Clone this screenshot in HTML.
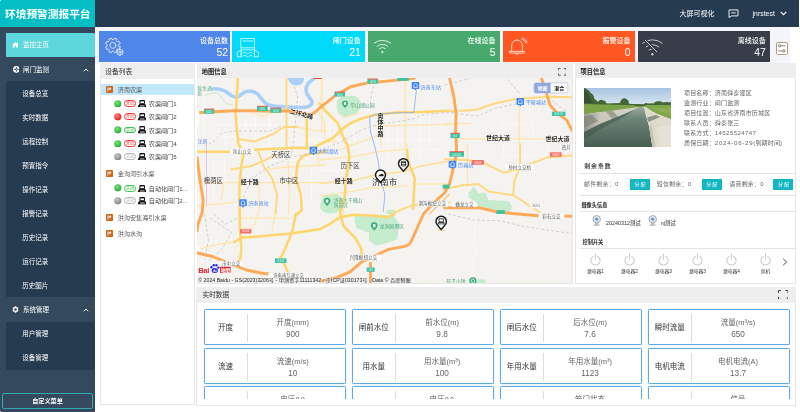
<!DOCTYPE html>
<html lang="zh"><head><meta charset="utf-8"><title>环境预警测报平台</title>
<style>
*{box-sizing:border-box;margin:0;padding:0}
html,body{width:800px;height:412px;overflow:hidden;background:#fff}
body{will-change:transform;font-family:"Liberation Sans","Noto Sans CJK SC",sans-serif;color:#333;position:relative}
.abs{position:absolute}
#hdr{left:0;top:0;width:799px;height:26.5px;background:#263a50}
#logo{left:0;top:0;width:94.5px;height:27px;background:#04bec4;color:#fff;font-weight:bold;font-size:10.7px;line-height:28.6px;padding-left:5px;overflow:hidden;white-space:nowrap;letter-spacing:0px}
#side{left:0;top:27px;width:95px;height:385px;background:#34495e}
.mi{position:absolute;left:6.3px;width:88.7px;height:24px;color:#fff;font-size:6.5px;line-height:24px;white-space:nowrap}
.mi span{position:absolute;left:16.7px}
.sub{position:absolute;left:6.3px;width:88.7px;background:#263a50}
.si{position:absolute;left:16px;color:#fff;font-size:6.5px;line-height:24px;height:24px;white-space:nowrap}
.card{position:absolute;top:31px;height:30.7px;color:#fff}
.card .t{position:absolute;right:4.8px;top:5px;font-size:7px;line-height:9px;white-space:nowrap;font-weight:500}
.card .n{position:absolute;right:4.8px;top:15.6px;font-size:10.4px;line-height:12px}
.panel{position:absolute;background:#fff;outline:1px solid #e6e6e6;outline-offset:-1px}
.ph{position:absolute;left:0;top:0;right:0;height:15px;background:#eeeeee}
.pt{position:absolute;font-size:6.25px;font-weight:bold;color:#222;line-height:8px;white-space:nowrap}
.tr{position:absolute;left:0;width:93px;height:11px;font-size:6.1px;line-height:11px;color:#444;white-space:nowrap}
.info{position:absolute;left:684px;font-size:6.05px;line-height:10px;color:#666;white-space:nowrap;letter-spacing:0.12px}
.btn{position:absolute;top:178.7px;width:19.8px;height:11px;background:#13b7c4;color:#fff;font-size:5px;line-height:11px;text-align:center;letter-spacing:1px;padding-left:1px}
.lb{position:absolute;font-size:5.9px;line-height:8px;color:#666;white-space:nowrap;letter-spacing:0.3px}
.hr{position:absolute;height:0.5px;background:#e4e4e4}
.dc{position:absolute;width:141.7px;height:35.6px;border:1px solid #5aabe3;border-radius:1.5px;background:#fff;box-shadow:0 0 1.2px rgba(78,163,222,.55)}
.dc .l{position:absolute;left:0;top:0;width:40.5px;height:34px;line-height:35px;text-align:center;font-size:7.5px;color:#333;white-space:nowrap}
.dc .d{position:absolute;left:41.8px;top:4px;width:0.6px;height:28px;background:#ddd}
.dc .v1{position:absolute;left:43px;right:5.4px;top:7.6px;text-align:center;font-size:7.5px;line-height:10px;color:#666;white-space:nowrap}
.dc .v2{position:absolute;left:43px;right:5.4px;top:20px;text-align:center;font-size:8.2px;line-height:10px;color:#666}
.c1 .v1,.c1 .v2{right:7.6px}
</style></head><body>
<div id="hdr" class="abs"></div>
<div id="logo" class="abs">环境预警测报平台</div>
<div class="abs" style="left:679.4px;top:8.5px;font-size:7px;line-height:10px;color:#fff;white-space:nowrap">大屏可视化</div>
<div class="abs" style="left:752.6px;top:8.5px;font-size:6.9px;line-height:10px;color:#fff;white-space:nowrap">jnrstest</div>
<svg class="abs" style="left:728px;top:9px" width="11" height="9" viewBox="0 0 11 9"><path d="M1 0.9h9v6h-6.5l-2.5 1.6z" fill="none" stroke="#fff" stroke-width="0.9"/><path d="M3.2 3.9h4.6" stroke="#fff" stroke-width="0.9"/></svg>
<svg class="abs" style="left:780px;top:11px" width="7" height="5" viewBox="0 0 7 5"><path d="M0.7 0.8L3.5 3.6L6.3 0.8" fill="none" stroke="#fff" stroke-width="1.1"/></svg>

<div id="side" class="abs">
 <div class="mi" style="top:6px;background:#5ed7dc"><span>监控主页</span></div>
 <div class="mi" style="top:30.5px"><span>闸门监测</span></div>
 <div class="sub" style="top:54px;height:216px">
  <div class="si" style="top:0.5px">设备总览</div>
  <div class="si" style="top:24.5px">实时数据</div>
  <div class="si" style="top:48.5px">远程控制</div>
  <div class="si" style="top:72.5px">预置指令</div>
  <div class="si" style="top:96.5px">操作记录</div>
  <div class="si" style="top:120.5px">报警记录</div>
  <div class="si" style="top:144.5px">历史记录</div>
  <div class="si" style="top:168.5px">运行记录</div>
  <div class="si" style="top:192.5px">历史图片</div>
 </div>
 <div class="mi" style="top:270.5px"><span>系统管理</span></div>
 <div class="sub" style="top:294.7px;height:48px">
  <div class="si" style="top:0px">用户管理</div>
  <div class="si" style="top:24px">设备管理</div>
 </div>
<svg class="abs" style="left:12.4px;top:15.4px" width="6.8" height="5.8" viewBox="0 0 6.8 5.8"><path d="M3.4,0.2 L6.7,3 L5.9,3 L5.9,5.6 L4.1,5.6 L4.1,3.8 L2.7,3.8 L2.7,5.6 L0.9,5.6 L0.9,3 L0.1,3z" fill="#fff"/><rect x="5" y="0.5" width="0.9" height="1.6" fill="#fff"/></svg><svg class="abs" style="left:12.5px;top:38.8px" width="6.8" height="6.8" viewBox="0 0 6.8 6.8"><circle cx="3.4" cy="3.4" r="3.3" fill="#fff"/><path d="M3.4,0.9V5.9M0.9,3.4H5.9" stroke="#34495e" stroke-width="0.8"/><circle cx="3.4" cy="3.4" r="1.1" fill="#34495e"/><circle cx="3.4" cy="3.4" r="0.5" fill="#fff"/></svg><svg class="abs" style="left:12.3px;top:279.3px" width="7" height="7" viewBox="0 0 7 7"><path d="M3.5,0.2 L4.2,0.3 L4.4,1.2 L5.1,1.6 L5.9,1.2 L6.5,2.2 L5.9,2.9 L5.9,4.1 L6.5,4.8 L5.9,5.8 L5.1,5.4 L4.4,5.8 L4.2,6.7 L2.8,6.7 L2.6,5.8 L1.9,5.4 L1.1,5.8 L0.5,4.8 L1.1,4.1 L1.1,2.9 L0.5,2.2 L1.1,1.2 L1.9,1.6 L2.6,1.2 L2.8,0.3z" fill="#fff"/><circle cx="3.5" cy="3.5" r="1.2" fill="#34495e"/></svg><svg class="abs" style="left:83px;top:40.6px" width="6" height="4" viewBox="0 0 6 4"><path d="M0.8,3.2 L3,1 L5.2,3.2" fill="none" stroke="#fff" stroke-width="1"/></svg><svg class="abs" style="left:83px;top:280.8px" width="6" height="4" viewBox="0 0 6 4"><path d="M0.8,3.2 L3,1 L5.2,3.2" fill="none" stroke="#fff" stroke-width="1"/></svg>

 <div class="abs" style="left:2px;top:366px;width:91px;height:15.8px;border:0.8px solid #36a9b5;border-radius:2px;color:#fff;font-size:6.1px;line-height:14.3px;text-align:center;font-weight:bold">自定义菜单</div>
</div>

<!-- stat row -->
<div class="abs" style="left:95px;top:26.5px;width:695.3px;height:37px;background:#f3f5fa"></div>
<div class="card" style="left:99px;width:131.3px;background:#4f86ea"><div class="t" style="right:2.3px">设备总数</div><div class="n" style="right:2.3px">52</div></div>
<div class="card" style="left:232.1px;width:133.4px;background:#00d9f9"><div class="t">闸门设备</div><div class="n">21</div></div>
<div class="card" style="left:367.5px;width:132.9px;background:#47a96e"><div class="t">在线设备</div><div class="n">5</div></div>
<div class="card" style="left:502.5px;width:132.9px;background:#ff5722"><div class="t">报警设备</div><div class="n">0</div></div>
<div class="card" style="left:637.6px;width:132.9px;background:#393d4a"><div class="t">离线设备</div><div class="n">47</div></div>
<div class="abs" style="left:775.7px;top:41.8px;width:12px;height:13px;border:0.7px solid #b59a7c;border-radius:1.8px;background:#fff"></div>

<svg class="abs" style="left:0;top:0;pointer-events:none" width="800" height="70" viewBox="0 0 800 70"><g fill="none" stroke="rgba(255,255,255,0.8)" stroke-width="0.9" stroke-linejoin="round" stroke-linecap="round"><path d="M120.22,47.04 L119.23,49.42 L117.67,48.87 L116.37,50.17 L116.92,51.73 L114.54,52.72 L113.82,51.23 L111.98,51.23 L111.26,52.72 L108.88,51.73 L109.43,50.17 L108.13,48.87 L106.57,49.42 L105.58,47.04 L107.07,46.32 L107.07,44.48 L105.58,43.76 L106.57,41.38 L108.13,41.93 L109.43,40.63 L108.88,39.07 L111.26,38.08 L111.98,39.57 L113.82,39.57 L114.54,38.08 L116.92,39.07 L116.37,40.63 L117.67,41.93 L119.23,41.38 L120.22,43.76 L118.73,44.48 L118.73,46.32z"/><circle cx="112.9" cy="45.4" r="3"/><path d="M123.15,51.73 L123.15,52.87 L122.14,52.84 L121.86,53.50 L122.60,54.20 L121.80,55.00 L121.10,54.26 L120.44,54.54 L120.47,55.55 L119.33,55.55 L119.36,54.54 L118.70,54.26 L118.00,55.00 L117.20,54.20 L117.94,53.50 L117.66,52.84 L116.65,52.87 L116.65,51.73 L117.66,51.76 L117.94,51.10 L117.20,50.40 L118.00,49.60 L118.70,50.34 L119.36,50.06 L119.33,49.05 L120.47,49.05 L120.44,50.06 L121.10,50.34 L121.80,49.60 L122.60,50.40 L121.86,51.10 L122.14,51.76z" fill="#4f86ea"/><circle cx="119.9" cy="52.3" r="0.9"/></g><g fill="none" stroke="rgba(255,255,255,0.8)" stroke-width="0.9" stroke-linejoin="round" stroke-linecap="round"><path d="M241.2,38.5H254.5V47.8H241.2z"/><path d="M243,41H252.8" stroke-dasharray="0.9 0.7"/><path d="M241.2,47.8V56.8M254.5,47.8V56.8M242,49.8H253.8"/><path d="M237.6,52 L241.2,49.8V56.8H237.6zM258,52 L254.5,49.8V56.8H258z"/><path d="M243.3,53 c1,-1 2,-1 3,0 s2,1 3,0 s2,-1 3,0M243.3,56.2 c1,-1 2,-1 3,0 s2,1 3,0 s2,-1 3,0"/></g><g fill="none" stroke="rgba(255,255,255,0.8)" stroke-width="1" stroke-linejoin="round" stroke-linecap="round"><path d="M374.10,43.15 A13.50,13.50 0 0 1 390.70,43.15"/><path d="M377.00,46.15 A8.80,8.80 0 0 1 387.80,46.15"/><path d="M379.40,48.55 A4.80,4.80 0 0 1 385.40,48.55"/></g><circle cx="382.4" cy="52.099999999999994" r="1.1" fill="rgba(255,255,255,0.85)"/><g fill="none" stroke="rgba(255,255,255,0.8)" stroke-width="0.9" stroke-linejoin="round" stroke-linecap="round"><path d="M511.7,51.4 V45.8 C511.7,42.2 514,40.2 517,40.2 C520,40.2 522.3,42.2 522.3,45.8 V51.4"/><path d="M510,51.4 H524 C525,51.4 525,53 524,53 H510 C509,53 509,51.4 510,51.4z"/><path d="M515.6,53.2 L517,54.8 L518.4,53.2"/><path d="M517,40.2V39.4"/><path d="M521.8,39.3 C523.8,39.8 525.2,41.2 525.8,43.2M522.6,37.9 C524.8,38.6 526.4,40.2 527.1,42.4"/></g><g fill="none" stroke="rgba(255,255,255,0.7)" stroke-width="1" stroke-linejoin="round" stroke-linecap="round"><path d="M642.60,43.19 A15.50,15.50 0 0 1 662.20,43.19"/><path d="M646.10,46.78 A10.20,10.20 0 0 1 658.70,46.78"/><path d="M649.10,49.93 A5.40,5.40 0 0 1 655.70,49.93"/></g><path d="M644.3,39.3 L657.8,52.8" stroke="#393d4a" stroke-width="3.2"/><path d="M645.2,40.2 L656.9,51.9" stroke="rgba(255,255,255,0.72)" stroke-width="1" stroke-linecap="round"/><circle cx="652.4" cy="54.2" r="1.2" fill="rgba(255,255,255,0.75)"/><g fill="none" stroke="#555" stroke-width="0.7"><circle cx="779.6" cy="45.8" r="1.2"/><path d="M780.8,45.8H785.4"/><circle cx="783.9" cy="50.9" r="1.2"/><path d="M778.2,50.9H782.7"/></g></svg>
<!-- device list panel -->
<div class="panel" id="dev" style="left:100.3px;top:63.3px;width:94.4px;height:342px">
 <div class="ph" style="height:15.7px"></div>
 <div class="abs" style="left:5px;top:3.6px;font-size:6.75px;line-height:9px;color:#333;white-space:nowrap">设备列表</div>
<div class="abs" style="left:0.3px;top:20.5px;width:93.4px;height:11px;background:#c2e9fb"></div><svg class="abs" style="left:5.7px;top:22.5px" width="7" height="7" viewBox="0 0 7 7"><rect width="7" height="7" rx="0.6" fill="#d2691e"/><path d="M1.9 1.5v4.2" stroke="#fff" stroke-width="0.7"/><path d="M2.4 1.7h2.7v2.1h-2.7z" fill="#fbe3cf"/></svg><div class="tr" style="left:17.5px;top:20.5px;color:#555">济南农渠</div><svg class="abs" style="left:14px;top:36.5px" width="7.6" height="7.6" viewBox="0 0 7.6 7.6"><defs><radialGradient id="g403" cx="0.4" cy="0.35" r="0.7"><stop offset="0" stop-color="#7fe07f"/><stop offset="1" stop-color="#1fa82f"/></radialGradient></defs><circle cx="3.8" cy="3.8" r="3.6" fill="url(#g403)"/></svg><div class="abs" style="left:23.7px;top:36.9px;width:12px;height:6.7px;border:0.8px solid #f23030;border-radius:3.4px;color:#f23030;font-size:4.1px;line-height:5.3px;text-align:center;font-weight:normal;white-space:nowrap;overflow:hidden;letter-spacing:-0.1px">开启</div><svg class="abs" style="left:37.8px;top:36.6px" width="8.4" height="7.4" viewBox="0 0 8.4 7.4"><path d="M1.9 0.5h4.6v3.2h-4.6z" fill="none" stroke="#111" stroke-width="1"/><path d="M2 1.3h4.4" stroke="#111" stroke-width="0.5"/><path d="M1 4h6.4v1.3h-6.4z" fill="#111"/><path d="M0 7.3v-1.8l2-1.2v3zM8.4 7.3v-1.8l-2-1.2v3z" fill="#111"/><path d="M2 6h4.4M2 7h4.4" stroke="#111" stroke-width="0.75"/></svg><div class="tr" style="left:48.5px;top:34.8px;width:auto">农渠闸门1</div><svg class="abs" style="left:14px;top:49.8px" width="7.6" height="7.6" viewBox="0 0 7.6 7.6"><defs><radialGradient id="g536" cx="0.4" cy="0.35" r="0.7"><stop offset="0" stop-color="#ff8080"/><stop offset="1" stop-color="#e01818"/></radialGradient></defs><circle cx="3.8" cy="3.8" r="3.6" fill="url(#g536)"/></svg><div class="abs" style="left:23.7px;top:50.2px;width:12px;height:6.7px;border:0.8px solid #f23030;border-radius:3.4px;color:#f23030;font-size:4.1px;line-height:5.3px;text-align:center;font-weight:normal;white-space:nowrap;overflow:hidden;letter-spacing:-0.1px">开启</div><svg class="abs" style="left:37.8px;top:49.9px" width="8.4" height="7.4" viewBox="0 0 8.4 7.4"><path d="M1.9 0.5h4.6v3.2h-4.6z" fill="none" stroke="#111" stroke-width="1"/><path d="M2 1.3h4.4" stroke="#111" stroke-width="0.5"/><path d="M1 4h6.4v1.3h-6.4z" fill="#111"/><path d="M0 7.3v-1.8l2-1.2v3zM8.4 7.3v-1.8l-2-1.2v3z" fill="#111"/><path d="M2 6h4.4M2 7h4.4" stroke="#111" stroke-width="0.75"/></svg><div class="tr" style="left:48.5px;top:48.1px;width:auto">农渠闸门2</div><svg class="abs" style="left:14px;top:63.1px" width="7.6" height="7.6" viewBox="0 0 7.6 7.6"><defs><radialGradient id="g668" cx="0.4" cy="0.35" r="0.7"><stop offset="0" stop-color="#7fe07f"/><stop offset="1" stop-color="#1fa82f"/></radialGradient></defs><circle cx="3.8" cy="3.8" r="3.6" fill="url(#g668)"/></svg><div class="abs" style="left:23.7px;top:63.5px;width:12px;height:6.7px;border:0.8px solid #3fc24f;border-radius:3.4px;color:#3fc24f;font-size:4.1px;line-height:5.3px;text-align:center;font-weight:normal;white-space:nowrap;overflow:hidden;letter-spacing:-0.1px">关闭</div><svg class="abs" style="left:37.8px;top:63.2px" width="8.4" height="7.4" viewBox="0 0 8.4 7.4"><path d="M1.9 0.5h4.6v3.2h-4.6z" fill="none" stroke="#111" stroke-width="1"/><path d="M2 1.3h4.4" stroke="#111" stroke-width="0.5"/><path d="M1 4h6.4v1.3h-6.4z" fill="#111"/><path d="M0 7.3v-1.8l2-1.2v3zM8.4 7.3v-1.8l-2-1.2v3z" fill="#111"/><path d="M2 6h4.4M2 7h4.4" stroke="#111" stroke-width="0.75"/></svg><div class="tr" style="left:48.5px;top:61.4px;width:auto">农渠闸门3</div><svg class="abs" style="left:14px;top:76.3px" width="7.6" height="7.6" viewBox="0 0 7.6 7.6"><defs><radialGradient id="g801" cx="0.4" cy="0.35" r="0.7"><stop offset="0" stop-color="#7fe07f"/><stop offset="1" stop-color="#1fa82f"/></radialGradient></defs><circle cx="3.8" cy="3.8" r="3.6" fill="url(#g801)"/></svg><div class="abs" style="left:23.7px;top:76.7px;width:12px;height:6.7px;border:0.8px solid #f23030;border-radius:3.4px;color:#f23030;font-size:4.1px;line-height:5.3px;text-align:center;font-weight:normal;white-space:nowrap;overflow:hidden;letter-spacing:-0.1px">开启</div><svg class="abs" style="left:37.8px;top:76.4px" width="8.4" height="7.4" viewBox="0 0 8.4 7.4"><path d="M1.9 0.5h4.6v3.2h-4.6z" fill="none" stroke="#111" stroke-width="1"/><path d="M2 1.3h4.4" stroke="#111" stroke-width="0.5"/><path d="M1 4h6.4v1.3h-6.4z" fill="#111"/><path d="M0 7.3v-1.8l2-1.2v3zM8.4 7.3v-1.8l-2-1.2v3z" fill="#111"/><path d="M2 6h4.4M2 7h4.4" stroke="#111" stroke-width="0.75"/></svg><div class="tr" style="left:48.5px;top:74.6px;width:auto">农渠闸门4</div><svg class="abs" style="left:14px;top:89.6px" width="7.6" height="7.6" viewBox="0 0 7.6 7.6"><defs><radialGradient id="g933" cx="0.4" cy="0.35" r="0.7"><stop offset="0" stop-color="#c8c8c8"/><stop offset="1" stop-color="#7d7d7d"/></radialGradient></defs><circle cx="3.8" cy="3.8" r="3.6" fill="url(#g933)"/></svg><div class="abs" style="left:23.7px;top:90.0px;width:12px;height:6.7px;border:0.8px solid #b5b5b5;border-radius:3.4px;color:#b5b5b5;font-size:4.1px;line-height:5.3px;text-align:center;font-weight:normal;white-space:nowrap;overflow:hidden;letter-spacing:-0.1px">关闭</div><svg class="abs" style="left:37.8px;top:89.7px" width="8.4" height="7.4" viewBox="0 0 8.4 7.4"><path d="M1.9 0.5h4.6v3.2h-4.6z" fill="none" stroke="#111" stroke-width="1"/><path d="M2 1.3h4.4" stroke="#111" stroke-width="0.5"/><path d="M1 4h6.4v1.3h-6.4z" fill="#111"/><path d="M0 7.3v-1.8l2-1.2v3zM8.4 7.3v-1.8l-2-1.2v3z" fill="#111"/><path d="M2 6h4.4M2 7h4.4" stroke="#111" stroke-width="0.75"/></svg><div class="tr" style="left:48.5px;top:87.9px;width:auto">农渠闸门5</div><svg class="abs" style="left:5.7px;top:106.9px" width="7" height="7" viewBox="0 0 7 7"><rect width="7" height="7" rx="0.6" fill="#d2691e"/><path d="M1.9 1.5v4.2" stroke="#fff" stroke-width="0.7"/><path d="M2.4 1.7h2.7v2.1h-2.7z" fill="#fbe3cf"/></svg><div class="tr" style="left:17.5px;top:104.9px;color:#555">金沟河引水渠</div><svg class="abs" style="left:14px;top:121.2px" width="7.6" height="7.6" viewBox="0 0 7.6 7.6"><defs><radialGradient id="g1250" cx="0.4" cy="0.35" r="0.7"><stop offset="0" stop-color="#7fe07f"/><stop offset="1" stop-color="#1fa82f"/></radialGradient></defs><circle cx="3.8" cy="3.8" r="3.6" fill="url(#g1250)"/></svg><div class="abs" style="left:23.7px;top:121.6px;width:12px;height:6.7px;border:0.8px solid #3fc24f;border-radius:3.4px;color:#3fc24f;font-size:4.1px;line-height:5.3px;text-align:center;font-weight:normal;white-space:nowrap;overflow:hidden;letter-spacing:-0.1px">关闭</div><svg class="abs" style="left:37.8px;top:121.3px" width="8.4" height="7.4" viewBox="0 0 8.4 7.4"><path d="M1.9 0.5h4.6v3.2h-4.6z" fill="none" stroke="#111" stroke-width="1"/><path d="M2 1.3h4.4" stroke="#111" stroke-width="0.5"/><path d="M1 4h6.4v1.3h-6.4z" fill="#111"/><path d="M0 7.3v-1.8l2-1.2v3zM8.4 7.3v-1.8l-2-1.2v3z" fill="#111"/><path d="M2 6h4.4M2 7h4.4" stroke="#111" stroke-width="0.75"/></svg><div class="tr" style="left:48.5px;top:119.5px;width:auto">自动化闸门1...</div><svg class="abs" style="left:14px;top:133.8px" width="7.6" height="7.6" viewBox="0 0 7.6 7.6"><defs><radialGradient id="g1376" cx="0.4" cy="0.35" r="0.7"><stop offset="0" stop-color="#c8c8c8"/><stop offset="1" stop-color="#7d7d7d"/></radialGradient></defs><circle cx="3.8" cy="3.8" r="3.6" fill="url(#g1376)"/></svg><div class="abs" style="left:23.7px;top:134.2px;width:12px;height:6.7px;border:0.8px solid #b5b5b5;border-radius:3.4px;color:#b5b5b5;font-size:4.1px;line-height:5.3px;text-align:center;font-weight:normal;white-space:nowrap;overflow:hidden;letter-spacing:-0.1px">关闭</div><svg class="abs" style="left:37.8px;top:133.9px" width="8.4" height="7.4" viewBox="0 0 8.4 7.4"><path d="M1.9 0.5h4.6v3.2h-4.6z" fill="none" stroke="#111" stroke-width="1"/><path d="M2 1.3h4.4" stroke="#111" stroke-width="0.5"/><path d="M1 4h6.4v1.3h-6.4z" fill="#111"/><path d="M0 7.3v-1.8l2-1.2v3zM8.4 7.3v-1.8l-2-1.2v3z" fill="#111"/><path d="M2 6h4.4M2 7h4.4" stroke="#111" stroke-width="0.75"/></svg><div class="tr" style="left:48.5px;top:132.1px;width:auto">自动化闸门2...</div><svg class="abs" style="left:5.7px;top:151.2px" width="7" height="7" viewBox="0 0 7 7"><rect width="7" height="7" rx="0.6" fill="#d2691e"/><path d="M1.9 1.5v4.2" stroke="#fff" stroke-width="0.7"/><path d="M2.4 1.7h2.7v2.1h-2.7z" fill="#fbe3cf"/></svg><div class="tr" style="left:17.5px;top:149.2px;color:#555">洪沟安集海引水渠</div><svg class="abs" style="left:5.7px;top:167.1px" width="7" height="7" viewBox="0 0 7 7"><rect width="7" height="7" rx="0.6" fill="#d2691e"/><path d="M1.9 1.5v4.2" stroke="#fff" stroke-width="0.7"/><path d="M2.4 1.7h2.7v2.1h-2.7z" fill="#fbe3cf"/></svg><div class="tr" style="left:17.5px;top:165.1px;color:#555">洪沟水沟</div>
</div>

<!-- map panel -->
<div class="panel" id="mapp" style="left:196.7px;top:63.3px;width:376.2px;height:220.6px">
 <div class="ph"></div>
 <div class="pt" style="left:5.1px;top:4.5px">地图信息</div>
<svg class="abs" style="left:361.3px;top:4.9px" width="8.4" height="7.8" viewBox="0 0 8.4 7.8"><path d="M0.5,2.4V0.5H2.6M5.8,0.5H7.9V2.4M7.9,5.4V7.3H5.8M2.6,7.3H0.5V5.4" fill="none" stroke="#444" stroke-width="0.8"/></svg>
<!--MAP-->
<svg class="abs" style="left:0.8px;top:14.7px" width="375" height="205.5" viewBox="197.5 78 375 205.5" font-family="'Liberation Sans','Noto Sans CJK SC',sans-serif">
<rect x="197.5" y="78" width="375" height="205.5" fill="#f5f3f0"/>
<!-- parks -->
<g fill="#c6ecce">
<path d="M338,100 C340,96 348,95 354,96 C360,97 362,102 361,107 C359,113 352,117.5 345,117 C339,116 335.5,108 338,100z"/>
<path d="M355,216 L374,214.5 L394,215.5 L399.5,224 L398,239 L388,243 L376,245.5 L369.5,241 L369.5,233 L357,228 L355,221z"/>
<path d="M468.8,193 L474.5,186.5 L479,193 L486,192.5 L489,200 L509,201 L513,207 L509.5,212 L480.5,208 L475.5,202 L469,197z"/>
<path d="M322,199 C324,194.5 332,192.5 337,194 C342,195.5 344.5,200 343.5,205 C342.5,210 338,213 332,213.5 C326,214 321,211 320.5,206z"/>
<path d="M386.3,214 L388,210 L395,209.5 L396.5,214z"/>
<rect x="477" y="279.4" width="9" height="4.1"/>
</g>
<path d="M204.5,95.5 C210,94 216,91 219.5,94 C223,98 224,102 227,103.5 L233.4,105.2" fill="none" stroke="#bfe8cf" stroke-width="0.9"/>
<!-- water -->
<g fill="none" stroke="#a8d0fa" stroke-linecap="round" stroke-linejoin="round">
<path d="M213,88.7 C220,88.5 224,90 227,92 C231,95 234,98 237.5,97 C241,96 243,92.5 247,91.5 C251,90.5 255,91.5 258,94 C261,97 263,101 266.5,103.5 C270,106 276,106.5 281,106.6 L296,107.4 C302,107.6 306,107.5 308.5,106.6 C313,105 313.5,102 311,99 C308,95.5 306.5,93 306.5,90 C306.5,86 309,82 314,79" stroke-width="3.6"/>
<path d="M289,78 L304,78 L303,82 C299,86.5 293,85.5 290,81z" fill="#a8d0fa" stroke-width="1.2"/>
</g>
<!-- thin grey/white streets -->
<g fill="none" stroke="#fdfcfb" stroke-width="0.8" opacity="0.8">
<path d="M204.5,78V146M214,125H288M256,114V146M270,114V160M226,128V146M214,137H236M246,120V150M300,140H345M330,118V146M355,120V146M388,118V160M398,118V172M420,118V160M430,118V150M376,140H445M400,150H445M502.8,123.6H533.4V140H502.8zM504,144V156H548V144M475.6,214 C476,230 474,240 474.8,250 L476.5,252 L474,256 L472,278.6M258,160H300M214,160V200M225,156V182M300,186V214M320,170H345M312,168V200"/>
</g>
<!-- minor yellow roads -->
<g fill="none" stroke="#ffe6ad" stroke-width="1.3" stroke-linecap="round" stroke-linejoin="round">
<path d="M322.5,78V132"/><path d="M321.7,78V101"/>
<path d="M252,112.5 L264,116.8 L270.8,113.4"/>
<path d="M376,126 L450,124.4"/>
<path d="M405.8,78V146"/>
<path d="M381.2,116V146"/>
<path d="M519.8,104.9V144"/>
<path d="M445,123.6H470.5"/>
<path d="M458,138.9H572.5"/>
<path d="M197.5,182.7H326"/>
<path d="M259.7,183V214"/>
<path d="M224,184.8 L221.5,200"/>
<path d="M198.5,206 L238.5,201.8"/>
<path d="M288.6,161 L290,195 L289,214"/>
<path d="M267.4,169.5 C280,167 300,166 326,165"/>
<path d="M320,160 L354,156.7 L379.5,151.6 L407,149"/>
<path d="M415.2,184H450"/>
<path d="M320,195.8 C340,194 360,190 371,188.2 L407,186"/>
<path d="M468,144V184.8"/>
<path d="M241.9,218.2H291.2"/>
<path d="M258,214 L255.5,224.2 C253,228 248,229 244,228"/>
<path d="M275.9,214 L272.5,231"/>
<path d="M201,248.8 L221.5,243.7 L235,242"/>
<path d="M320,143 L337,140.6"/>
<path d="M343,118 L360,113"/>
<path d="M319.3,112.9 L325.1,123.1 L325.1,140.6"/>
<path d="M341,149.3 L380,134.7"/>
<path d="M317.8,153.7 L319.3,165.3"/>
<path d="M298,127 L315,130.4 L326,131.2"/>
<path d="M407.5,144V150"/>
<path d="M340,200 L345,214"/>
<path d="M320,183.4 L354,180.5 L374.4,175.4 L405,171.2 L422,166 L450,161" stroke-width="1.6" stroke="#ffdf99"/>
</g>
<!-- major yellow roads -->
<g fill="none" stroke="#ffd56e" stroke-width="2.6" stroke-linecap="round" stroke-linejoin="round">
<path d="M238.3,78 L236.5,110 L236,114 L237,124 L238.7,143.7 L244.3,152.2 L241.9,165.5 L240.2,183 L239.8,195 L240.2,214 L240.5,231 L241.9,248 L241,258.2 L238,264"/>
<path d="M307.3,116.8V146" />
<path d="M197.5,151.7H230M255,149.8 L297,147.8 L311,148.2"/>
<path d="M320,103.5 C322,105 323.5,107.5 325.1,110 L338.2,123.1 L342.6,134.7 L348.4,146.4 L349.9,158 L348,170 L346.3,180 L345.5,195 L340.4,214"/>
<path d="M311,148.6 L316.4,146.4 L323.7,142.8 L333.9,137.7 L341.1,130.4 L349.9,123.8 L361.5,118.7 L374.4,115 L396.5,112.5 L422,112 L450,110.8"/>
<path d="M298,214 L302.2,210 L301.4,195 L296.3,178 L298,164.4 C299,159 303,156 308,154.2 L326,151.6"/>
<path d="M296.3,214 L292.9,231 L286,248 L281,258.2 L286,266.7 L288.6,273.5"/>
<path d="M235,242 L241.9,237.8 L264,236 L291.2,233.5 L308.1,231 L320,229.3 L330,224.2 L340.4,217.4 L354,214.8 L376,215.7 L388,217.4 L394.8,214"/>
<path d="M341.2,214 L343.8,226 L355.7,237.8 L361.6,248 L362.5,258.2"/>
<path d="M407.5,150 L408.4,161 L415.2,178 L414.3,195 L413.5,208.6"/>
</g>
<g fill="none" stroke="#ffd980" stroke-width="2" stroke-linecap="round" stroke-linejoin="round">

<path d="M238.5,138.9 L255.5,141.4 L272.5,134.6 L284.4,127 L298,127"/>
<path d="M287,78V146"/>
<path d="M231.7,169.5 L252,166 L267.4,159.3 L275,155"/>
<path d="M258.9,151.6 L264,166 L272.5,178 L277.6,195 L275.9,214"/>
<path d="M391.4,214 L408.4,206.9 L422,203.5 L450,202.6"/>
<path d="M445,111.3H455M459.4,110.8 L475.6,110 L496,103.2 L516.4,99 L533.4,97.7 L550.4,96.7 L572.5,97.2"/>
<path d="M445,159.3 L467,160 L484,162.7 L504.5,172.9 L521.5,167.8 L547,157.6 L572.5,155.5"/>
<path d="M520.6,144V166 L514.7,181.4 L513.8,195"/>
<path d="M445,189 L462,185.6 L479,184 L489.2,191.6 L513,195 L521.5,200 L530,206 L540,212"/>
</g>
<!-- orange highways -->
<g fill="none" stroke="#fdaa58" stroke-width="2.9" stroke-linecap="round" stroke-linejoin="round">
<path d="M197.5,112.7 L213,111.7 L235,110.8 L257,110.8 L271,111.2 L288,110.8 L298,112.3 L309,114.6 C313,114.8 316,112 320,108.2 L337,94.7 L350.6,87 L367.6,82.8 L388,81.1 L408.4,79 L415,78"/>
<path d="M450,78 L454.3,96.4 L456.6,113.4 L456,132 L457,146 L456.9,154.2 L453.5,169.5 L450,184 L445,193 L439,198.4 L428.8,208.6 L424,214 L418.6,226 L411.8,241.2 C410,245 407,246 405,246.3 L388,249.7 L376,255.6 L362.5,261.6 L350.6,271.8 L337,277.7 L322,281"/>
<path d="M541.9,78 L547,93 L550.4,104.9 L557.1,112.5 L567.3,120.2 L572.5,130.4"/>
<path d="M445,207.7 L479,207.7 L496,211.5 L513,213.5 L538.5,215.7 L572.5,216.3"/>
<path d="M197.7,157.6 L200.2,178 L203.6,200 L202.8,212 L198.5,224.2 L197.5,231"/>
<path d="M197.7,253 L213,256.5 L230,263.3 L247,270 L264,273.5 L300,276"/>
<path d="M371,263.3V283.5"/>
<path d="M450,194.5 L442.5,201.5 L432.5,211.5 L430,214" stroke-width="1.1" stroke="#fcc184"/>
</g>
<!-- purple thin + metro blue -->
<path d="M207,144V206" fill="none" stroke="#d6b8ec" stroke-width="0.7"/>
<path d="M416.9,90.4 L414.3,112.5 L396,112.8 L376,114.2 L370,117.6 L371,132 L375.2,146 L378.6,161 L381.2,178 L385.4,195 L383.7,212" fill="none" stroke="#7fb0f3" stroke-width="0.8"/>
<!-- railways -->
<g fill="none" stroke="#c2c2c2" stroke-width="0.7" stroke-dasharray="3 2">
<path d="M294.5,86.2 L298,96.4 L296.3,118.5 L293.7,144 L291.2,157.6 L267.4,167.8 L253.8,178 L245.3,193.3 L243,204"/>
<path d="M204.5,146 L214,142 L222,133 L236,131 L270,131 L284,125"/>
<path d="M374.4,86.2 C372,92 371,100 371,106.6"/>
<path d="M294.6,156.6 L316.4,152.2 L344,140.6 L361.5,130.4 L380,123.8 L396.5,121.9 L415.2,118.5 L425.4,114.2 L450,112.5 L462,114.2 L479,116 L496,108.3 L516.4,104"/>
<path d="M445,85.3 L470.5,78.5"/>
<path d="M507.9,79.4 L519.8,93"/>
<path d="M448.4,214 L473.9,220 L501,220.8 L521.5,226 L547,230 L572.4,233.5"/>
<path d="M205,214 L209,240 L205,260M210,218 L232,232 L222,250 L208,262M214,214 L226,224 L238,218"/>
<path d="M552,100 L568,112"/>
</g>
<!-- shields -->
<g>
<g fill="#3ec3a0"><rect x="204.5" y="109.3" width="10.2" height="4.4"/><rect x="257.5" y="106.5" width="10.7" height="4.4"/><rect x="270.8" y="108.3" width="11" height="4.4"/><rect x="335" y="92.3" width="10.5" height="4.2"/><rect x="368" y="79.3" width="10.6" height="4.3"/><rect x="397.8" y="78" width="11.4" height="2.8"/><rect x="552.4" y="111.7" width="13.6" height="4.3"/><rect x="451" y="133.5" width="9.3" height="4.5"/><rect x="450" y="152" width="14.5" height="4.7"/><rect x="496.8" y="210.2" width="8.5" height="3.8"/><rect x="443.2" y="184.6" width="6.8" height="4"/><rect x="275.5" y="258.4" width="11.5" height="4.6"/><rect x="367.2" y="267.5" width="8" height="4.3"/></g>
<g fill="#e8453c"><rect x="204.5" y="108.6" width="10.2" height="0.9"/><rect x="257.5" y="105.8" width="10.7" height="0.9"/><rect x="270.8" y="107.6" width="11" height="0.9"/><rect x="335" y="91.6" width="10.5" height="0.9"/><rect x="368" y="78.6" width="10.6" height="0.9"/><rect x="451" y="132.8" width="9.3" height="0.9"/><rect x="450" y="151.3" width="14.5" height="0.9"/><rect x="314" y="78" width="8" height="1"/></g>
<g fill="#f0736b"><rect x="472.2" y="160" width="12.2" height="4.7" rx="0.5"/><rect x="550.4" y="152.2" width="11.8" height="4.5" rx="0.5"/><rect x="240.5" y="229" width="11.5" height="4.5" rx="0.5"/></g>
<g fill="#fff" font-size="3" text-anchor="middle" opacity="0.85"><text x="209.6" y="112.6">G20</text><text x="262.8" y="109.8">G20</text><text x="276.3" y="111.6">G20</text><text x="340.2" y="95.5">G20</text><text x="373.3" y="82.6">G20</text><text x="559.2" y="115">S0101</text><text x="455.6" y="137">G2</text><text x="457.2" y="155.5">G2001</text><text x="478.3" y="163.5">G309</text><text x="556.3" y="155.6">G309</text><text x="246.2" y="232.4">G104</text><text x="281.2" y="261.8">S103</text><text x="371.2" y="270.8">G2</text></g>
</g>
<!-- white label boxes -->
<g fill="#fff" stroke="#e4e4e4" stroke-width="0.3">
<rect x="230.8" y="148.2" width="23.8" height="5.7" rx="1"/><rect x="418.2" y="201" width="29.2" height="5.2" rx="1"/><rect x="505.3" y="164" width="29.7" height="5.5" rx="1"/><rect x="560.5" y="145" width="12" height="5.2" rx="1"/><rect x="452.6" y="201.8" width="24.7" height="5.1" rx="1"/><rect x="530.8" y="203.5" width="11.9" height="4.7" rx="1"/><rect x="220.6" y="260.7" width="22.1" height="5.1" rx="1"/><rect x="269" y="272.6" width="40" height="4.6" rx="1"/><rect x="345.8" y="254.8" width="36.2" height="5.4" rx="1"/><rect x="539.3" y="214" width="25.5" height="4.2" rx="1"/><rect x="445" y="201.8" width="3.5" height="5.1" rx="1"/>
</g>
<g fill="#555" font-size="4.6" text-anchor="middle">
<text x="242.7" y="152.7">匡山立交</text><text x="432.8" y="205.3">港沟枢纽立交</text><text x="520.2" y="168.5">孙村立交桥</text><text x="566.5" y="149.4">燕井</text><text x="465" y="206">蟠龙立交</text><text x="536.8" y="207.2" font-size="3.4">X051</text><text x="231.7" y="264.9">市中立交</text><text x="289" y="276.6" font-size="4.4">济南南互通立交</text><text x="363.9" y="259.2">兴隆枢纽立交</text><text x="552" y="217.8">彩石立交</text>
</g>
<!-- district / road labels -->
<g fill="#444" font-size="6.3" text-anchor="middle">
<text x="213.8" y="182.8">槐荫区</text><text x="289.4" y="182.6">市中区</text><text x="281.4" y="156.7">天桥区</text><text x="350.6" y="167.8">历下区</text>
</g>
<g fill="#222" font-size="6" font-weight="bold" text-anchor="middle" stroke="#fff" stroke-width="0.5" paint-order="stroke">
<text x="250.3" y="183.6">经十路</text><text x="344.2" y="183.4">经十路</text><text x="498.5" y="140.3">世纪大道</text><text x="558" y="140.5">世纪大道</text>
<text transform="translate(301.5,116.2) rotate(14)">二环北路</text>
<text x="381" y="118">奥</text><text x="381" y="124">体</text><text x="381" y="130">中</text><text x="381" y="136">路</text>
</g>
<text x="385" y="184.6" font-size="8.3" fill="#222" text-anchor="middle" stroke="#fff" stroke-width="0.5" paint-order="stroke">济南市</text>
<!-- green poi -->
<g fill="#3fae7c">
<path d="M345.5,100.5a3,3 0 0 1 3,3c0,2-3,4.5-3,4.5s-3-2.5-3-4.5a3,3 0 0 1 3-3z"/>
<path d="M327.6,197.8a3.3,3.3 0 0 1 3.3,3.3c0,2.2-3.3,5-3.3,5s-3.3-2.8-3.3-5a3.3,3.3 0 0 1 3.3-3.3z"/>
<path d="M374.7,222.3a3.3,3.3 0 0 1 3.3,3.3c0,2.2-3.3,5-3.3,5s-3.3-2.8-3.3-5a3.3,3.3 0 0 1 3.3-3.3z"/>
<circle cx="473.4" cy="280.8" r="3.6"/>
</g>
<g fill="#fff"><rect x="344.4" y="102.2" width="2.2" height="2.6"/><rect x="326.4" y="199.6" width="2.4" height="3"/><rect x="373.5" y="224.2" width="2.4" height="3"/><circle cx="473.4" cy="280.8" r="1.7" fill="none" stroke="#fff" stroke-width="0.7"/></g>
<g fill="#4aa57c" font-size="4.9">
<text x="350.6" y="106.8">华山湖公园</text><text x="334.4" y="201.8" font-size="4.7">济南大千佛山</text><text x="334.4" y="207.4" font-size="4.7">风景区</text><text x="380.3" y="228.2">龙洞风景区</text><text x="446.7" y="283.2">孩子小镇</text>
<text x="197.9" y="89.6" font-size="4.9">际生态</text><text x="197.9" y="95.2" font-size="4.9">区</text>
</g>
<text x="198" y="143" font-size="4.9" fill="#5b8ff0">注册</text>
<!-- stations -->
<g id="stn">
<g fill="#3f86f5">
<path d="M413,82h6a.8,.8 0 0 1 .8,.8v5.4a.8,.8 0 0 1-.8,.8h-1.8l-1.2,1.6-1.2-1.6H413a.8,.8 0 0 1-.8-.8v-5.4a.8,.8 0 0 1 .8-.8z"/>
<path d="M517.8,98h6a.8,.8 0 0 1 .8,.8v5.4a.8,.8 0 0 1-.8,.8h-1.8l-1.2,1.6-1.2-1.6h-1.8a.8,.8 0 0 1-.8-.8v-5.4a.8,.8 0 0 1 .8-.8z"/>
<path d="M240.5,199.3h6a.8,.8 0 0 1 .8,.8v5.4a.8,.8 0 0 1-.8,.8h-1.8l-1.2,1.6-1.2-1.6h-1.8a.8,.8 0 0 1-.8-.8v-5.4a.8,.8 0 0 1 .8-.8z"/>
<path d="M311,146.7h6a.8,.8 0 0 1 .8,.8v5.4a.8,.8 0 0 1-.8,.8h-1.8l-1.2,1.6-1.2-1.6H311a.8,.8 0 0 1-.8-.8v-5.4a.8,.8 0 0 1 .8-.8z"/>
<path d="M450,160.8h6a.8,.8 0 0 1 .8,.8v5.4a.8,.8 0 0 1-.8,.8h-1.8l-1.2,1.6-1.2-1.6H450a.8,.8 0 0 1-.8-.8v-5.4a.8,.8 0 0 1 .8-.8z"/>
</g>
<g fill="none" stroke="#fff" stroke-width="0.7">
<path d="M414.3,87.6v-3l1.7-1.2 1.7,1.2v3z"/><path d="M519.1,103.6v-3l1.7-1.2 1.7,1.2v3z"/><path d="M241.8,204.9v-3l1.7-1.2 1.7,1.2v3z"/><path d="M312.3,152.3v-3l1.7-1.2 1.7,1.2v3z"/><path d="M451.3,166.4v-3l1.7-1.2 1.7,1.2v3z"/>
</g>
<g fill="#4a8af4" font-size="5.1">
<text x="421" y="88.8">济南东站</text><text x="526.2" y="104.2">平陵城站</text><text x="248.7" y="205.4">济南南站</text><text x="318.2" y="152.6">大明湖站</text><text x="458.6" y="167.1">历城站</text>
</g>
</g>
<!-- markers -->
<g id="mk">
<path d="M381,182.5 L377.6,178.6 A5,5 0 1 1 384.4,178.6z" fill="#fff" stroke="#1c1c1c" stroke-width="1.5"/>
<path d="M378.3,176.3c1-.2 1.2-1.6 2.4-1.8s1.6-1.2 2.6-.6s1.2,1.8.4,2.4z" fill="#1c1c1c"/>
<path d="M404,171.2 L400.6,167.3 A5,5 0 1 1 407.4,167.3z" fill="#fff" stroke="#1c1c1c" stroke-width="1.5"/>
<path d="M402,161.3h4v4.6h-4zM401.3,162.5h5.4M401.3,164.3h5.4" fill="none" stroke="#1c1c1c" stroke-width="0.8"/>
<path d="M441.7,229.8 L438.3,225.4 A5.2,5.2 0 1 1 445.1,225.4z" fill="#fff" stroke="#1c1c1c" stroke-width="1.5"/>
<path d="M439.5,218.8h4.4v3h-4.4zM438.8,222.5h5.8v1.4h-5.8z" fill="none" stroke="#1c1c1c" stroke-width="0.8"/>
<path d="M438.5,230.3h6.5" stroke="#f4c978" stroke-width="0.8"/>
</g>
<!-- map type control -->
<g>
<rect x="534.7" y="82.9" width="33.6" height="10" rx="1.2" fill="#fff" stroke="#8fa8df" stroke-width="0.5"/>
<path d="M535.9,82.9h15.2v10h-15.2a1.2,1.2 0 0 1-1.2-1.2v-7.6a1.2,1.2 0 0 1 1.2-1.2z" fill="#8ea8e0"/>
<text x="543" y="89.8" font-size="5" fill="#fff" text-anchor="middle" font-weight="bold">地图</text>
<text x="559.7" y="89.8" font-size="5" fill="#111" text-anchor="middle" font-weight="bold">混合</text>
</g>
<!-- left zoom ctrl remnants -->
<rect x="197.5" y="110" width="2.3" height="15" rx="1" fill="#fff" opacity="0.9"/>
<rect x="197.5" y="246" width="2.6" height="4.5" fill="#fff"/>
<!-- baidu logo -->
<g>
<text x="198.7" y="272.6" font-size="7.6" font-weight="bold" fill="#e4232d" letter-spacing="-0.3">Bai</text>
<g fill="#2932e1"><ellipse cx="215.3" cy="270.6" rx="3.2" ry="2.5"/><circle cx="211.9" cy="267.3" r="1.2"/><circle cx="214.2" cy="265.2" r="1.2"/><circle cx="216.9" cy="265.3" r="1.2"/><circle cx="218.9" cy="267.6" r="1.2"/></g>
<text x="215.3" y="271.9" font-size="3" fill="#fff" text-anchor="middle" font-weight="bold">du</text>
<rect x="220.5" y="266.7" width="10.5" height="6.2" rx="0.6" fill="#e4232d"/>
<text x="225.8" y="271.7" font-size="4.6" fill="#fff" text-anchor="middle" font-weight="bold">地图</text>
</g>
<text x="198.8" y="281.5" font-size="4.85" fill="#222" stroke="#f5f3f0" stroke-width="0.6" paint-order="stroke" textLength="212.5" lengthAdjust="spacingAndGlyphs">© 2024 Baidu - GS(2023)3206号 - 甲测资字11111342 - 京ICP证030173号 - Data © 百度智图</text>
</svg>
<!--/MAP-->
</div>

<!-- project panel -->
<div class="panel" id="proj" style="left:575.4px;top:63.3px;width:220.6px;height:220.4px">
 <div class="ph"></div>
 <div class="pt" style="left:5.1px;top:4.3px">项目信息</div>
<svg class="abs" style="left:8.7px;top:24.8px" width="87.1" height="59.4" viewBox="0 0 87.1 59.4" preserveAspectRatio="none">
<defs><linearGradient id="sky" x1="0" y1="0" x2="0" y2="1"><stop offset="0" stop-color="#a6c4e2"/><stop offset="1" stop-color="#dde8f0"/></linearGradient>
<linearGradient id="wat" x1="0" y1="0" x2="0" y2="1"><stop offset="0" stop-color="#9aaea3"/><stop offset="0.3" stop-color="#6c8577"/><stop offset="1" stop-color="#465d51"/></linearGradient>
<linearGradient id="lb" x1="0" y1="0" x2="1" y2="0"><stop offset="0" stop-color="#93948a"/><stop offset="0.3" stop-color="#c9c6ba"/><stop offset="1" stop-color="#d6d3c8"/></linearGradient></defs>
<rect width="87.1" height="18" fill="url(#sky)"/>
<path d="M0,15.5 L87.1,17 V24 H0z" fill="#6d9440"/>
<path d="M0,0 C1.5,0.5 2.5,0 3.5,2 C5,1.5 6,4 7,5.5 C8.5,5 10,8 10.5,11 C12,12 13,12.5 14,14 C15,11.5 18,11 19,12.5 C21,12 22,14 22.5,15.5 L36,15 C36.5,11.5 39,9.8 41.5,10.5 C43.5,11 45,13 45,15.8 L50,16 L60,16.3 L61,15 L65,15.6 L70,15.2 C71,13 77,12.8 79,14.5 L83,14 L87.1,14.5 V18 H0z" fill="#456636"/>
<path d="M0,2 C2,3 4,4 5,8 C6,11 8,13 10,15 L0,15z" fill="#35532c"/>
<path d="M0,16 L20,16.5 L50,17.3 L54.5,19 L20,23.5 L0,26.5z" fill="#7ba246"/>
<path d="M61,17 H87.1 V31.5 L72,25.5 L62,19z" fill="#7da748"/>
<path d="M66,19 L87.1,21 V26 L74,23z" fill="#93b25a" opacity="0.7"/>
<path d="M0,26.5 L20,23.5 L54.5,19 L56,19.3 L45,24 L17,35.5 L0,43.7z" fill="url(#lb)"/>
<path d="M0,29 L8,27 L14,33 L0,40z" fill="#85877d" opacity="0.75"/>
<path d="M22,23.4 L28,22.6 L34,28.4 L28,31z" fill="#8c8d82" opacity="0.7"/>
<path d="M56,19.3 L59.4,18.2 L65.2,38.8 L68.5,59.4 H0 V43.7 L17,35.5 L45,24z" fill="url(#wat)"/>
<path d="M0,43.7 L17,35.5 L45,24 L50,22 L40,29 L20,39 L6,48 L0,50z" fill="#3c5246" opacity="0.5"/>
<path d="M59.4,18.2 L61.9,19 L71.8,25.6 L87.1,31.4 V59.4 H68.5 L65.2,38.8z" fill="#dedacc"/>
<path d="M65.2,38.8 L68.5,59.4 H71.5 L67.5,37z" fill="#bfb9a6" opacity="0.7"/>
<path d="M63,29.5 L72,27 L76,29 L64.5,34z" fill="#77786f" opacity="0.75"/>
<path d="M72,40 L87.1,36 V59.4 H76z" fill="#e6e2d6" opacity="0.8"/>
</svg><div class="info" style="left:108.6px;top:24.6px">项目名称：济南舜泰灌区</div><div class="info" style="left:108.6px;top:34.5px">监测行业：闸门监测</div><div class="info" style="left:108.6px;top:44.6px">项目位置：山东省济南市历城区</div><div class="info" style="left:108.6px;top:54.6px">联系人员：舜泰张三</div><div class="info" style="left:108.6px;top:64.3px">联系方式：<span style="letter-spacing:0.4px">14525524747</span></div><div class="info" style="left:108.6px;top:74.3px">质保日期：<span style="letter-spacing:0.75px">2024-06-29</span>(到期时间)</div><div class="lb" style="left:8.8px;top:98.7px;font-weight:bold;color:#444;letter-spacing:1px">剩余条数</div><div class="hr" style="left:4.6px;top:109.5px;width:215px"></div><div class="lb" style="left:8.6px;top:117.0px">邮件剩余：0</div><div class="lb" style="left:81.3px;top:117.0px">短信剩余：0</div><div class="lb" style="left:153.9px;top:117.0px">语音剩余：0</div><div class="btn" style="left:54.6px;top:115.4px">分配</div><div class="btn" style="left:126.5px;top:115.4px">分配</div><div class="btn" style="left:198.1px;top:115.4px">分配</div><div class="hr" style="left:4.6px;top:132.0px;width:215px"></div><div class="pt" style="left:6.0px;top:137.9px;font-size:5.2px">摄像头信息</div><div class="hr" style="left:4.6px;top:147.7px;width:215px"></div><svg class="abs" style="left:17.0px;top:151.9px" width="9.4" height="10.8" viewBox="0 0 9.4 10.8"><circle cx="4.7" cy="4.3" r="3.8" fill="#f2f2f2" stroke="#8a8a8a" stroke-width="0.7"/><circle cx="4.7" cy="4.3" r="2.2" fill="#dfe9f5" stroke="#9aa" stroke-width="0.4"/><circle cx="4.7" cy="4.3" r="1.2" fill="#2d8fe0"/><path d="M3.6,8 L3,9.6 H6.4 L5.8,8z" fill="#aaa"/><path d="M1.9,10.2H7.5" stroke="#888" stroke-width="0.8"/></svg><svg class="abs" style="left:72.6px;top:151.9px" width="9.4" height="10.8" viewBox="0 0 9.4 10.8"><circle cx="4.7" cy="4.3" r="3.8" fill="#f2f2f2" stroke="#8a8a8a" stroke-width="0.7"/><circle cx="4.7" cy="4.3" r="2.2" fill="#dfe9f5" stroke="#9aa" stroke-width="0.4"/><circle cx="4.7" cy="4.3" r="1.2" fill="#2d8fe0"/><path d="M3.6,8 L3,9.6 H6.4 L5.8,8z" fill="#aaa"/><path d="M1.9,10.2H7.5" stroke="#888" stroke-width="0.8"/></svg><div class="abs" style="left:30.6px;top:156.5px;font-size:5.4px;line-height:7px;color:#333;white-space:nowrap">20240312测试</div><div class="abs" style="left:85.4px;top:156.5px;font-size:5.4px;line-height:7px;color:#333;white-space:nowrap">nj测试</div><div class="pt" style="left:7.1px;top:174.6px;font-size:5.2px">控制开关</div><div class="hr" style="left:4.6px;top:185.0px;width:215px"></div><svg class="abs" style="left:14.6px;top:189.7px" width="11" height="12.6" viewBox="0 0 11 12.6"><path d="M3.3,3.4 A4.6,4.6 0 1 0 7.7,3.4" fill="none" stroke="#cfcfcf" stroke-width="1.1" stroke-linecap="round"/><path d="M5.5,0.8V6.2" stroke="#cfcfcf" stroke-width="1.1" stroke-linecap="round"/></svg><div class="abs" style="left:5.1px;top:205.0px;width:30px;text-align:center;font-size:4.7px;line-height:7px;color:#333;white-space:nowrap">继电器1</div><svg class="abs" style="left:48.6px;top:189.7px" width="11" height="12.6" viewBox="0 0 11 12.6"><path d="M3.3,3.4 A4.6,4.6 0 1 0 7.7,3.4" fill="none" stroke="#cfcfcf" stroke-width="1.1" stroke-linecap="round"/><path d="M5.5,0.8V6.2" stroke="#cfcfcf" stroke-width="1.1" stroke-linecap="round"/></svg><div class="abs" style="left:39.1px;top:205.0px;width:30px;text-align:center;font-size:4.7px;line-height:7px;color:#333;white-space:nowrap">继电器2</div><svg class="abs" style="left:82.6px;top:189.7px" width="11" height="12.6" viewBox="0 0 11 12.6"><path d="M3.3,3.4 A4.6,4.6 0 1 0 7.7,3.4" fill="none" stroke="#cfcfcf" stroke-width="1.1" stroke-linecap="round"/><path d="M5.5,0.8V6.2" stroke="#cfcfcf" stroke-width="1.1" stroke-linecap="round"/></svg><div class="abs" style="left:73.1px;top:205.0px;width:30px;text-align:center;font-size:4.7px;line-height:7px;color:#333;white-space:nowrap">继电器3</div><svg class="abs" style="left:116.6px;top:189.7px" width="11" height="12.6" viewBox="0 0 11 12.6"><path d="M3.3,3.4 A4.6,4.6 0 1 0 7.7,3.4" fill="none" stroke="#cfcfcf" stroke-width="1.1" stroke-linecap="round"/><path d="M5.5,0.8V6.2" stroke="#cfcfcf" stroke-width="1.1" stroke-linecap="round"/></svg><div class="abs" style="left:107.1px;top:205.0px;width:30px;text-align:center;font-size:4.7px;line-height:7px;color:#333;white-space:nowrap">继电器3</div><svg class="abs" style="left:150.6px;top:189.7px" width="11" height="12.6" viewBox="0 0 11 12.6"><path d="M3.3,3.4 A4.6,4.6 0 1 0 7.7,3.4" fill="none" stroke="#cfcfcf" stroke-width="1.1" stroke-linecap="round"/><path d="M5.5,0.8V6.2" stroke="#cfcfcf" stroke-width="1.1" stroke-linecap="round"/></svg><div class="abs" style="left:141.1px;top:205.0px;width:30px;text-align:center;font-size:4.7px;line-height:7px;color:#333;white-space:nowrap">继电器4</div><svg class="abs" style="left:184.6px;top:189.7px" width="11" height="12.6" viewBox="0 0 11 12.6"><path d="M3.3,3.4 A4.6,4.6 0 1 0 7.7,3.4" fill="none" stroke="#cfcfcf" stroke-width="1.1" stroke-linecap="round"/><path d="M5.5,0.8V6.2" stroke="#cfcfcf" stroke-width="1.1" stroke-linecap="round"/></svg><div class="abs" style="left:175.1px;top:205.0px;width:30px;text-align:center;font-size:4.7px;line-height:7px;color:#333;white-space:nowrap">风机</div><svg class="abs" style="left:207.1px;top:195.0px" width="6" height="8" viewBox="0 0 6 8"><path d="M1.2,0.8 L4.6,4 L1.2,7.2" fill="none" stroke="#333" stroke-width="0.9"/></svg>
</div>

<!-- realtime panel -->
<div class="panel" id="rt" style="left:196.4px;top:286.7px;width:599.6px;height:119px">
 <div class="ph" style="height:16.5px"></div>
 <div class="pt" style="left:6.1px;top:4.2px;font-weight:normal;font-size:6.7px;color:#333">实时数据</div>
<div class="abs" style="left:0;top:0;width:599.6px;height:112px;overflow:hidden"><div class="dc c1" style="left:7.9px;top:22.3px"><div class="l">开度</div><div class="d"></div><div class="v1">开度(mm)</div><div class="v2">900</div></div><div class="dc" style="left:156.0px;top:22.3px"><div class="l">闸前水位</div><div class="d"></div><div class="v1">前水位(m)</div><div class="v2">9.8</div></div><div class="dc" style="left:304.0px;top:22.3px"><div class="l">闸后水位</div><div class="d"></div><div class="v1">后水位(m)</div><div class="v2">7.6</div></div><div class="dc" style="left:452.0px;top:22.3px"><div class="l">瞬时流量</div><div class="d"></div><div class="v1">流量(m³/s)</div><div class="v2">650</div></div><div class="dc c1" style="left:7.9px;top:61.4px"><div class="l">流速</div><div class="d"></div><div class="v1">流速(m/s)</div><div class="v2">10</div></div><div class="dc" style="left:156.0px;top:61.4px"><div class="l">用水量</div><div class="d"></div><div class="v1">用水量(m³)</div><div class="v2">100</div></div><div class="dc" style="left:304.0px;top:61.4px"><div class="l">年用水量</div><div class="d"></div><div class="v1">年用水量(m³)</div><div class="v2">1123</div></div><div class="dc" style="left:452.0px;top:61.4px"><div class="l">电机电流</div><div class="d"></div><div class="v1">电机电流(A)</div><div class="v2">13.7</div></div><div class="dc c1" style="left:7.9px;top:99.8px"><div class="l"></div><div class="d"></div><div class="v1">电压(V)</div><div class="v2">220</div></div><div class="dc" style="left:156.0px;top:99.8px"><div class="l"></div><div class="d"></div><div class="v1">电压(V)</div><div class="v2">5</div></div><div class="dc" style="left:304.0px;top:99.8px"><div class="l"></div><div class="d"></div><div class="v1">箱门状态</div><div class="v2">关</div></div><div class="dc" style="left:452.0px;top:99.8px"><div class="l"></div><div class="d"></div><div class="v1">信号</div><div class="v2">31</div></div></div><svg class="abs" style="left:581.4px;top:2.9px" width="10.4" height="9.8" viewBox="0 0 10.4 9.8"><path d="M0.5,3V0.5H3M7.4,0.5H9.9V3M9.9,6.8V9.3H7.4M3,9.3H0.5V6.8" fill="none" stroke="#333" stroke-width="0.9"/></svg>
</div>
<svg class="abs" style="left:0;top:0" width="2" height="2" viewBox="0 0 2 2"><path d="M0,0H1.8A1.8,1.8 0 0 0 0,1.8z" fill="#fff"/></svg>
<svg class="abs" style="left:0;top:410px" width="2" height="2" viewBox="0 0 2 2"><path d="M0,2H1.8A1.8,1.8 0 0 1 0,0.2z" fill="#fff"/></svg>
</body></html>
